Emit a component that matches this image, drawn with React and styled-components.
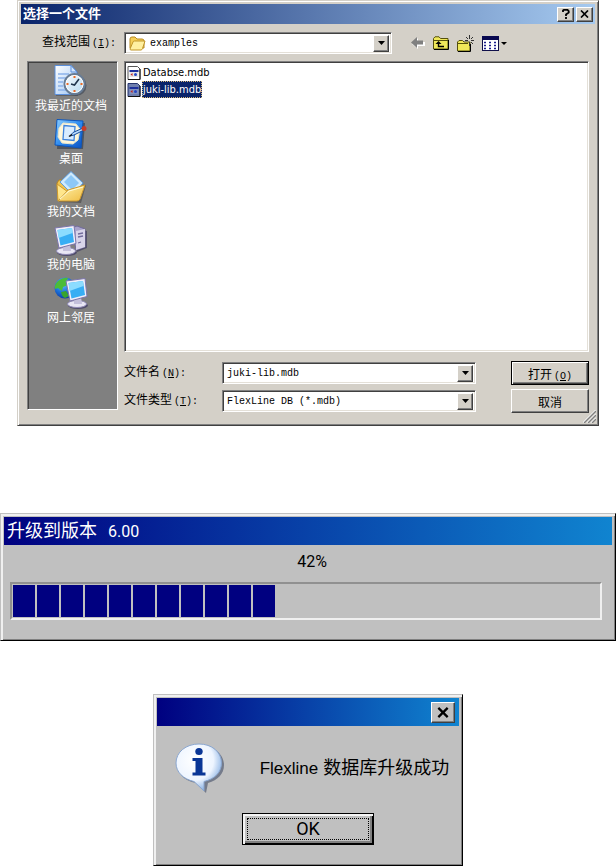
import { useState } from "react";
import styled, { createGlobalStyle, css } from "styled-components";

const App = () => {
    return (
        <StyledMain>
            <GlobalStyle />
            <OpenDialog />
            <UpgradeDialog percent={42} />
            <DoneDialog />
        </StyledMain>
    );
};

const places = [
    { name: "我最近的文档", icon: <RecentIcon /> },
    { name: "桌面", icon: <DesktopIcon /> },
    { name: "我的文档", icon: <DocumentsIcon /> },
    { name: "我的电脑", icon: <ComputerIcon /> },
    { name: "网上邻居", icon: <NetworkIcon /> },
];

const files = ["Databse.mdb", "juki-lib.mdb"];

const OpenDialog = () => {
    const [fileName, setFileName] = useState("juki-lib.mdb");

    return (
        <FileWindow aria-labelledby='open-title'>
            <FileTitleBar>
                <h1 id='open-title'>选择一个文件</h1>
                <CaptionButton aria-label='帮助'>
                    <svg width='8' height='10' viewBox='0 0 8 10'>
                        <path
                            d='M1 3V1.5L2 .8H5.5L6.7 2V3.6L4 5.4V7M4 8V10'
                            fill='none'
                            stroke='#000'
                            strokeWidth='1.8'
                        />
                    </svg>
                </CaptionButton>
                <CaptionButton aria-label='关闭'>
                    <CloseGlyph />
                </CaptionButton>
            </FileTitleBar>
            <LookInRow>
                <FieldLabel htmlFor='look-in'>
                    查找范围
                    <kbd>
                        (<u>I</u>):
                    </kbd>
                </FieldLabel>
                <LookInField>
                    <FolderIcon />
                    <select id='look-in'>
                        <option>examples</option>
                    </select>
                    <DropArrow />
                </LookInField>
                <Toolbar>
                    <button aria-label='后退'>
                        <BackIcon />
                    </button>
                    <button aria-label='向上一级'>
                        <UpIcon />
                    </button>
                    <button aria-label='新建文件夹'>
                        <NewFolderIcon />
                    </button>
                    <button aria-label='查看菜单'>
                        <ViewsIcon />
                    </button>
                </Toolbar>
            </LookInRow>
            <Columns>
                <PlacesBar>
                    {places.map((place) => (
                        <Place key={place.name}>
                            {place.icon}
                            <span>{place.name}</span>
                        </Place>
                    ))}
                </PlacesBar>
                <Content>
                    <FileList>
                        {files.map((file) => (
                            <li key={file}>
                                <FileItem
                                    $selected={file === fileName}
                                    onClick={() => setFileName(file)}
                                >
                                    <DatabaseIcon selected={file === fileName} />
                                    <span>{file}</span>
                                </FileItem>
                            </li>
                        ))}
                    </FileList>
                    <FormGrid>
                        <FieldLabel htmlFor='file-name'>
                            文件名
                            <kbd>
                                (<u>N</u>):
                            </kbd>
                        </FieldLabel>
                        <Field>
                            <input
                                id='file-name'
                                value={fileName}
                                onChange={(e) => setFileName(e.target.value)}
                            />
                            <DropArrow />
                        </Field>
                        <PushButton $default>
                            打开
                            <kbd>
                                (<u>O</u>)
                            </kbd>
                        </PushButton>
                        <FieldLabel htmlFor='file-type'>
                            文件类型
                            <kbd>
                                (<u>T</u>):
                            </kbd>
                        </FieldLabel>
                        <Field>
                            <select id='file-type'>
                                <option>FlexLine DB (*.mdb)</option>
                            </select>
                            <DropArrow />
                        </Field>
                        <PushButton>取消</PushButton>
                    </FormGrid>
                </Content>
            </Columns>
            <Grip width='13' height='13' viewBox='0 0 13 13' aria-hidden='true'>
                <path d='M0 13L13 0M4 13L13 4M8 13L13 8' stroke='#fff' strokeWidth='1.4' />
                <path d='M1 13L13 1M5 13L13 5M9 13L13 9' stroke='#808080' strokeWidth='1.4' />
            </Grip>
        </FileWindow>
    );
};

const UpgradeDialog = ({ percent }) => {
    const blocks = Math.round((percent * 26) / 100);

    return (
        <UpgradeWindow aria-labelledby='upgrade-title'>
            <WideTitleBar>
                <h2 id='upgrade-title'>
                    升级到版本 <span>6.00</span>
                </h2>
            </WideTitleBar>
            <Percent>{percent}%</Percent>
            <Progress
                role='progressbar'
                aria-valuenow={percent}
                aria-valuemin={0}
                aria-valuemax={100}
                aria-labelledby='upgrade-title'
            >
                {Array.from({ length: blocks }, (_, i) => (
                    <Block key={i} />
                ))}
            </Progress>
        </UpgradeWindow>
    );
};

const DoneDialog = () => {
    return (
        <DoneWindow aria-labelledby='done-text'>
            <WideTitleBar>
                <CaptionButton $large aria-label='关闭'>
                    <CloseGlyph size={12} />
                </CaptionButton>
            </WideTitleBar>
            <Message>
                <InfoIcon />
                <p id='done-text'>
                    <span>Flexline</span> 数据库升级成功
                </p>
            </Message>
            <OkButton>
                <span>OK</span>
            </OkButton>
        </DoneWindow>
    );
};

const DropArrow = () => (
    <ArrowBox aria-hidden='true'>
        <svg width='7' height='4' viewBox='0 0 7 4'>
            <path d='M0 0H7L3.5 4Z' />
        </svg>
    </ArrowBox>
);

const CloseGlyph = ({ size = 9 }) => (
    <svg width={size} height={size - 1} viewBox='0 0 9 8'>
        <path d='M1 .5L8 7.5M8 .5L1 7.5' stroke='#000' strokeWidth='1.7' />
    </svg>
);

function FolderIcon() {
    return (
        <svg width='17' height='15' viewBox='0 0 17 15'>
            <path
                d='M1 12V3Q1 1 3 1H6L8 3H13Q15 3 15 5V12Z'
                fill='#f5cf58'
                stroke='#b88a20'
            />
            <path
                d='M1 13L4 6Q4.300 5 5.500 5H16L13.500 12.500Q13 14 12 14H2Q1 14 1 13Z'
                fill='#fff0a0'
                stroke='#c09528'
            />
        </svg>
    );
}

function BackIcon() {
    return (
        <svg width='14' height='12' viewBox='0 0 14 12'>
            <path d='M1 7L7 1V5H14V9H7V12Z' fill='#fff' />
            <path d='M0 5.500L6 0V3.500H12V7.500H6V11Z' fill='#808080' />
        </svg>
    );
}

function UpIcon() {
    return (
        <svg width='16' height='14' viewBox='0 0 16 14'>
            <path
                d='M.5 13V2.500L2 .8H6L7.500 2.500H15V13Z'
                fill='#f0e85a'
                stroke='#55500c'
            />
            <path d='M1 4.500H15' stroke='#55500c' />
            <path d='M5.500 6V10.500H11' fill='none' stroke='#000' strokeWidth='1.4' />
            <path d='M2.500 8L5.500 5L8.500 8Z' />
            <path d='M1 13.500H15.500V4' fill='none' stroke='#000' />
        </svg>
    );
}

function NewFolderIcon() {
    return (
        <svg width='17' height='17' viewBox='0 0 17 17'>
            <path
                d='M.5 16V7L2 5.500H5.500L7 7H13V16Z'
                fill='#f0e85a'
                stroke='#55500c'
            />
            <path d='M1 8.500H11' stroke='#55500c' />
            <path
                d='M12.500 0V4M12.500 7V11M8 5.500H11M14 5.500H17M9 2L11 4M16 2L14 4M14 7L16 9'
                stroke='#333'
            />
            <path d='M1 16.500H13.500V9' fill='none' stroke='#000' />
        </svg>
    );
}

function ViewsIcon() {
    return (
        <svg width='25' height='15' viewBox='0 0 25 15'>
            <rect x='.5' y='.5' width='16' height='14' fill='#fff' stroke='#10104a' />
            <rect width='17' height='4' fill='#08084f' />
            <path
                d='M2 6.500H5M7 6.500H10M12 6.500H15M2 9.500H5M7 9.500H10M12 9.500H15M2 12.500H5M7 12.500H10M12 12.500H15'
                stroke='#1c1c8c'
                strokeWidth='1.6'
                strokeDasharray='2 1'
            />
            <path d='M19 6H25L22 9Z' />
        </svg>
    );
}

function DatabaseIcon({ selected }) {
    return (
        <svg width='14' height='14' viewBox='0 0 14 14'>
            <path
                d='M1 .5H10.500L13 3V13.500H1Z'
                fill={selected ? "#6f7fae" : "#fff"}
                stroke={selected ? "#26356e" : "#555"}
            />
            <path d='M1 13.500H13V3' fill='none' stroke='#111' />
            <rect x='2.500' y='4' width='9' height='7' fill={selected ? "#8391bc" : "#e4e4e4"} />
            <path d='M2.500 5H11.500' stroke='#1c2f9c' strokeWidth='2' />
            <path d='M3.500 8.500L5.500 7V10Z' fill='#c02020' />
            <circle cx='8.500' cy='8.500' r='1.500' fill='#2446c4' />
        </svg>
    );
}

function RecentIcon() {
    return (
        <svg width='34' height='32' viewBox='0 0 34 32'>
            <defs>
                <linearGradient id='sheet' x1='0' y1='0' x2='1' y2='1'>
                    <stop offset='0' stopColor='#fff' />
                    <stop offset='1' stopColor='#9cc4f4' />
                </linearGradient>
                <linearGradient id='clock' x1='0' y1='0' x2='1' y2='1'>
                    <stop offset='0' stopColor='#f8fcff' />
                    <stop offset='1' stopColor='#b4d8f0' />
                </linearGradient>
            </defs>
            <path d='M2 1H18L24 8V31H2Z' fill='#444' opacity='.5' />
            <path d='M1 .5H17L23 7V29.500H1Z' fill='url(#sheet)' stroke='#5b8fdc' />
            <path d='M17 .5V7H23Z' fill='#d4e6fc' stroke='#5b8fdc' />
            <path
                d='M4 9H15M4 13H12M4 17H9M4 21H9M4 25H12'
                stroke='#8cb2ea'
                strokeWidth='1.500'
            />
            <circle cx='22' cy='20.500' r='10.500' fill='#444c58' opacity='.7' />
            <circle cx='20.500' cy='19' r='10' fill='url(#clock)' stroke='#687c94' strokeWidth='2' />
            <circle cx='20.500' cy='19' r='8.500' fill='none' stroke='#fff' />
            <path d='M20.500 11V13M20.500 25V27M12.500 19H14.500M26.500 19H28.500' stroke='#ec6a24' strokeWidth='2' />
            <path d='M25 14L20.500 20L17 19' fill='none' stroke='#20344c' strokeWidth='1.600' />
        </svg>
    );
}

function DesktopIcon() {
    return (
        <svg width='34' height='32' viewBox='0 0 34 32'>
            <defs>
                <linearGradient id='blotter' x1='0' y1='0' x2='1' y2='1'>
                    <stop offset='0' stopColor='#8fd0ff' />
                    <stop offset='.5' stopColor='#2f8cf0' />
                    <stop offset='1' stopColor='#0a50c0' />
                </linearGradient>
            </defs>
            <path d='M4 4L31 5L29 31H3Z' fill='#303848' opacity='.6' />
            <path d='M3 1.500L29 3L27 30L1 27Z' fill='url(#blotter)' stroke='#0c55bc' />
            <path d='M9 5L22 6L26 11L24 22L19 26L8 25L4 19L5 10Z' fill='#fff7da' stroke='#e6e4cc' />
            <path d='M10 7.500L21 8.500L20 22.500L9 21.500Z' fill='#d8ecff' stroke='#3d83dc' strokeWidth='1.300' />
            <path d='M16 18L19 14.500L29 10L30 12L20 17Z' fill='#b8dcff' stroke='#174d9c' />
            <circle cx='30' cy='10.500' r='2.500' fill='#c83c28' />
            <path d='M15 18.500L18 16.500' stroke='#111' strokeWidth='1.500' />
        </svg>
    );
}

function DocumentsIcon() {
    return (
        <svg width='34' height='32' viewBox='0 0 34 32'>
            <defs>
                <linearGradient id='flap' x1='0' y1='0' x2='1' y2='1'>
                    <stop offset='0' stopColor='#fff4b0' />
                    <stop offset='1' stopColor='#f0bc40' />
                </linearGradient>
            </defs>
            <path d='M4 12L32 14L27 32L5 31Z' fill='#333' opacity='.45' />
            <path d='M3 12L5 9H11L14 12L28 14L22 29H4Z' fill='#f0c450' stroke='#b88420' />
            <path d='M6 11L17 .5L29 12L19 24Z' fill='#d0eafc' stroke='#5c9cdc' />
            <path d='M10 11L17 4L25 12L18 19Z' fill='#8cc8f8' />
            <path d='M3 13L4 30L14 21Z' fill='#ffe68c' stroke='#cd9a30' />
            <path d='M4 30L14 19L31 14L26 28Q25 30 23 30Z' fill='url(#flap)' stroke='#cd9a30' />
            <path d='M6 28L15 20L29 16' fill='none' stroke='#fffbd8' />
        </svg>
    );
}

// the flat monitor is shared by the computer and network places
const Monitor = () => (
    <g>
        <ellipse cx='13' cy='28.500' rx='10' ry='3.500' fill='#444064' opacity='.8' />
        <ellipse cx='12' cy='27' rx='9.500' ry='3.500' fill='#e8e6f4' stroke='#8d87b4' />
        <path d='M9 20H16L17 27H9Z' fill='#c4c0dc' />
        <path d='M1 4L20 1.500L22 19.500L5 24Z' fill='#f1effa' stroke='#7c76ac' />
        <path d='M3.500 6L18 4L20 18L6.500 21.500Z' fill='#38aef4' />
        <path d='M3.500 6L18 4L18.500 9L4.500 14Z' fill='#8cdcff' />
    </g>
);

function ComputerIcon() {
    return (
        <svg width='34' height='32' viewBox='0 0 34 32'>
            <path d='M19 5L33 7V24L23 28Z' fill='#403c60' opacity='.7' />
            <path d='M18 4L23 2L31 5V23L22 26Z' fill='#a9a3cc' stroke='#716b9c' />
            <path d='M22 7L31 5V23L22 26Z' fill='#d8d4ea' />
            <path d='M24 10L29 9M24 13L29 12M24 19L27 18' stroke='#726c9c' strokeWidth='1.300' />
            <Monitor />
        </svg>
    );
}

function NetworkIcon() {
    return (
        <svg width='34' height='32' viewBox='0 0 34 32'>
            <defs>
                <radialGradient id='globe' cx='.4' cy='.3' r='.8'>
                    <stop offset='0' stopColor='#6cc4ff' />
                    <stop offset='.5' stopColor='#1c74dc' />
                    <stop offset='1' stopColor='#0a2c94' />
                </radialGradient>
            </defs>
            <circle cx='11' cy='11' r='10.500' fill='url(#globe)' />
            <path d='M4 4Q9 0 14 1L12 5L14 8L9 10L8 14L4 11L1 12Q0 8 4 4Z' fill='#4cbc38' />
            <path d='M7 15L12 14L15 19L11 21Q8 20 7 15Z' fill='#38a42c' />
            <g transform='translate(11 0)'>
                <Monitor />
            </g>
        </svg>
    );
}

function InfoIcon() {
    return (
        <svg width='50' height='50' viewBox='0 0 50 50'>
            <defs>
                <radialGradient id='bubble' cx='.4' cy='.35' r='.65'>
                    <stop offset='0' stopColor='#fff' />
                    <stop offset='.65' stopColor='#eef5ff' />
                    <stop offset='1' stopColor='#8eb4e4' />
                </radialGradient>
            </defs>
            <path
                d='M26 3C39 3 49 11 49 22C49 31 43 37 33 40L31 50L21 40C9 38 3 31 3 22C3 11 13 3 26 3Z'
                fill='#4b566e'
                opacity='.65'
            />
            <path
                d='M24 1C37 1 46.500 9 46.500 20C46.500 29 40 36 29 38.500L29 48L19 38.500C8 36 1 29 1 20C1 9 11 1 24 1Z'
                fill='url(#bubble)'
                stroke='#8aa6cf'
            />
            <ellipse cx='24' cy='8.500' rx='3.700' ry='3.500' fill='#0a3696' />
            <path d='M17.500 15H27.500V29.500H30.500V32.500H17.500V29.500H20.500V18H17.500Z' fill='#0a3696' />
        </svg>
    );
}

const GlobalStyle = createGlobalStyle`
    * {
        box-sizing: border-box;
        margin: 0;
        padding: 0;
    }
    body {
        background: #fff;
        color: #000;
        font-family: "Liberation Sans", "Noto Sans CJK SC", sans-serif;
    }
    button, input, select {
        font: inherit;
        color: inherit;
        border: none;
        background: none;
        border-radius: 0;
        outline: none;
    }
    select {
        appearance: none;
    }
    svg {
        display: block;
        flex: none;
    }
`;

const sunken = css`
    border: 1px solid;
    border-color: #808080 #fff #fff #808080;
    box-shadow: inset 1px 1px #404040, inset -1px -1px #e4e0d8;
`;

const raised = css`
    border: 1px solid;
    border-color: #fff #404040 #404040 #fff;
    box-shadow: inset -1px -1px #808080;
`;

const StyledMain = styled.main`
    display: flex;
    flex-direction: column;
`;

const FileWindow = styled.section`
    position: relative;
    margin: 0 17px 87px;
    padding: 2px;
    background: #d4d0c8;
    border: 1px solid;
    border-color: #d4d0c8 #404040 #404040 #d4d0c8;
    box-shadow: inset 1px 1px #fff, inset -1px -1px #808080;
    font-size: 12px;

    kbd {
        font-family: "Liberation Mono", monospace;
        font-size: 10px;
        margin-left: 2px;
    }
`;

const FileTitleBar = styled.header`
    display: flex;
    align-items: center;
    gap: 2px;
    height: 20px;
    margin: 1px;
    padding: 0 2px;
    background: linear-gradient(to right, #0a246a, #a6caf0);

    h1 {
        flex: 1;
        color: #fff;
        font-size: 13px;
        line-height: 18px;
        font-weight: bold;
    }
`;

const CaptionButton = styled.button`
    display: flex;
    align-items: center;
    justify-content: center;
    width: ${({ $large }) => ($large ? "24px" : "17px")};
    height: ${({ $large }) => ($large ? "21px" : "15px")};
    background: ${({ $large }) => ($large ? "#c0c0c0" : "#d4d0c8")};
    ${raised}
`;

const LookInRow = styled.div`
    display: flex;
    align-items: center;
    padding: 7px 89px 7px 22px;
`;

const FieldLabel = styled.label`
    line-height: 18px;
    white-space: nowrap;
`;

const Field = styled.div`
    display: flex;
    align-items: center;
    min-width: 0;
    height: 22px;
    padding: 2px;
    background: #fff;
    ${sunken}

    input,
    select {
        flex: 1;
        min-width: 0;
        padding: 2px 2px 0;
        font-family: "Liberation Mono", monospace;
        font-size: 10px;
        line-height: 16px;
    }
`;

const LookInField = styled(Field)`
    flex: 1;
    margin-left: 8px;
    padding-left: 4px;

    select {
        padding-left: 4px;
    }
`;

const ArrowBox = styled.span`
    display: flex;
    align-items: center;
    justify-content: center;
    width: 16px;
    height: 17px;
    background: #d4d0c8;
    pointer-events: none;
    ${raised}
`;

const Toolbar = styled.div`
    display: flex;
    align-items: center;
    gap: 8px;
    margin-left: 19px;
`;

const Columns = styled.div`
    display: flex;
    gap: 6px;
    padding: 0 7px 10px;
`;

const PlacesBar = styled.nav`
    display: flex;
    flex-direction: column;
    gap: 3px;
    width: 91px;
    padding: 3px 3px 3px 0;
    margin-bottom: 3px;
    background: #808080;
    ${sunken}
    box-shadow: inset 1px 1px #404040;
`;

const Place = styled.button`
    display: flex;
    flex-direction: column;
    align-items: center;
    gap: 1px;
    color: #fff;
    white-space: nowrap;

    span {
        line-height: 17px;
    }
`;

const Content = styled.div`
    flex: 1;
    min-width: 0;
`;

const FileList = styled.ul`
    min-height: 291px;
    padding: 2px;
    background: #fff;
    list-style: none;
    ${sunken}
`;

const FileItem = styled.button`
    display: flex;
    align-items: center;
    gap: 1px;
    height: 17px;
    font-family: "DejaVu Sans Condensed", "DejaVu Sans", sans-serif;
    font-size: 11px;

    span {
        line-height: 15px;
        border: 1px dotted transparent;
        ${({ $selected }) =>
            $selected &&
            css`
                background: #0a246a;
                border-color: #d8b878;
                color: #fff;
            `}
    }
`;

const FormGrid = styled.div`
    display: grid;
    grid-template-columns: 98px 1fr 78px;
    row-gap: 4px;
    align-items: center;
    margin-top: 9px;

    ${Field} {
        margin-right: 35px;
    }
`;

const PushButton = styled.button`
    height: 24px;
    background: #d4d0c8;
    ${raised}
    ${({ $default }) =>
        $default &&
        css`
            border-color: #000;
            box-shadow: inset 1px 1px #fff, inset -1px -1px #404040, inset -2px -2px #808080;
        `}
`;

const Grip = styled.svg`
    position: absolute;
    right: 2px;
    bottom: 2px;
`;

const ClassicWindow = styled.section`
    padding: 3px;
    background: #c0c0c0;
    border: 1px solid;
    border-color: #c0c0c0 #000 #000 #c0c0c0;
    box-shadow: inset 2px 2px #f0f0f0, inset -1px -1px #808080;
`;

const UpgradeWindow = styled(ClassicWindow)`
    margin-bottom: 53px;
    padding-bottom: 20px;
`;

const WideTitleBar = styled.header`
    display: flex;
    align-items: center;
    justify-content: flex-end;
    height: 28px;
    padding: 0 4px 0 3px;
    background: linear-gradient(to right, #000080, #1084d0);

    h2 {
        flex: 1;
        color: #fff;
        font-size: 18px;
        line-height: 26px;
        font-weight: normal;
        white-space: pre;
    }
    span {
        margin-left: 6px;
        font-family: Roboto, sans-serif;
        font-size: 16px;
    }
`;

const Percent = styled.p`
    padding: 5px 0 8px 8px;
    text-align: center;
    font-family: Roboto, sans-serif;
    font-size: 16px;
    line-height: 24px;
`;

const Progress = styled.div`
    display: flex;
    gap: 2px;
    height: 38px;
    margin: 0 10px 0 6px;
    padding: 1px;
    border: 2px solid;
    border-color: #909090 #f0f0f0 #f0f0f0 #909090;
`;

const Block = styled.div`
    width: 22px;
    background: #000080;
`;

const DoneWindow = styled(ClassicWindow)`
    align-self: center;
    display: flex;
    flex-direction: column;
    padding-bottom: 20px;
`;

const Message = styled.div`
    display: flex;
    align-items: center;
    gap: 35px;
    padding: 17px 10px 20px 18px;

    p {
        font-size: 18px;
        line-height: 26px;
        white-space: nowrap;
    }
    span {
        font-size: 17px;
    }
`;

const OkButton = styled.button`
    align-self: center;
    width: 132px;
    height: 32px;
    padding: 4px;
    font-family: Roboto, sans-serif;
    font-size: 18px;
    border: 1px solid #000;
    box-shadow: inset 2px 2px #f4f4f4, inset -1px -1px #000, inset -3px -3px #808080;

    span {
        display: block;
        line-height: 20px;
        border: 1px dotted #000;
    }
`;

export default App;
